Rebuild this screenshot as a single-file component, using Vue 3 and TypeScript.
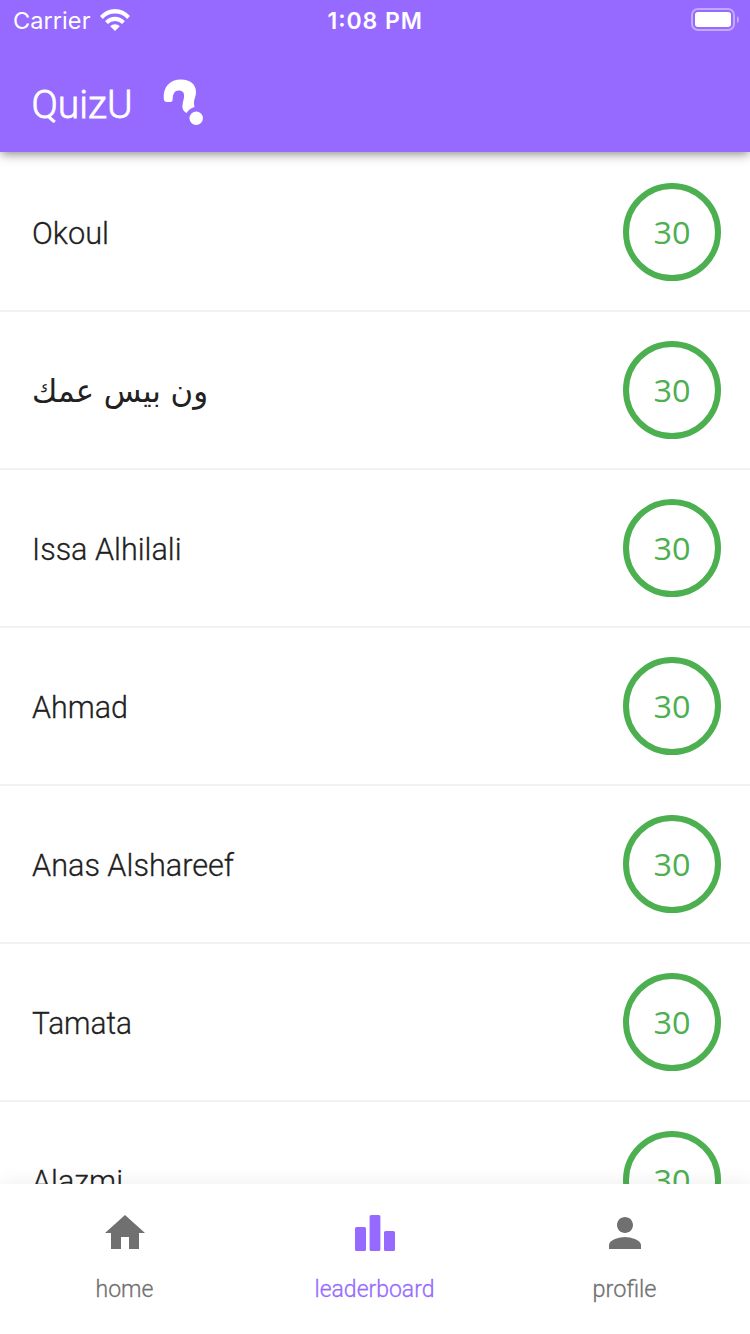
<script setup lang="ts">
interface Entry {
  name: string
  width: number
  score: number
  arabic?: boolean
}

const entries: Entry[] = [
  { name: 'Okoul', width: 77, score: 30 },
  { name: 'ون بيس عمك', width: 176, score: 30, arabic: true },
  { name: 'Issa Alhilali', width: 149.5, score: 30 },
  { name: 'Ahmad', width: 96, score: 30 },
  { name: 'Anas Alshareef', width: 202, score: 30 },
  { name: 'Tamata', width: 100, score: 30 },
  { name: 'Alazmi', width: 91, score: 30 },
]

const tabs = [
  { label: 'home', width: 58, icon: 'M10 20v-6h4v6h5v-8h3L12 3 2 12h3v8z', active: false },
  {
    label: 'leaderboard',
    width: 120,
    icon: 'M2.8 9h3.900q.8 0 .8.8v10.4q0 .8-.8.8H2.8q-.8 0-.8-.8V9.8Q2 9 2.8 9zM10.1 3h3.8q.8 0 .8.8v16.4q0 .8-.8.8h-3.800q-.8 0-.8-.8V3.8q0-.8.8-.8zM17.300 11h3.900q.8 0 .8.8v8.4q0 .8-.8.8h-3.900q-.8 0-.8-.8v-8.4q0-.8.8-.8z',
    active: true,
  },
  {
    label: 'profile',
    width: 64,
    icon: 'M12 12c2.21 0 4-1.79 4-4s-1.79-4-4-4-4 1.79-4 4 1.79 4 4 4zm0 2c-2.67 0-8 1.34-8 4v2h16v-2c0-2.66-5.33-4-8-4z',
    active: false,
  },
]
</script>

<template>
  <div class="screen">
    <header class="top">
      <div class="status">
        <div class="carrier">
          <svg width="77" height="40"><text x="0" y="29" textLength="77.5">Carrier</text></svg>
          <svg class="wifi" width="30" height="22" viewBox="0 0 30 22">
            <path d="M0 7.1Q6.4 0 15 0t15 7.1l-2.8 2.8Q22 4.600 15 4.600T2.8 9.9z" />
            <path d="M5.1 12.2Q9 7.7 15 7.7t9.9 4.5l-2.8 2.8Q19 12.100 15 12.100T7.9 15z" />
            <path d="M10.2 17.3Q12 15.2 15 15.2t4.8 2.1L15 22z" />
          </svg>
        </div>
        <svg class="time" width="94" height="40"><text x="-0.5" y="29" textLength="94.5">1:08 PM</text></svg>
        <svg class="battery" width="50" height="26" viewBox="0 0 50 26">
          <rect x="2" y="2" width="42" height="21" rx="6" class="shell" />
          <rect x="5" y="5" width="36" height="15" rx="3" />
          <path d="M47 9q2 1 2 3.5T47 16z" class="tip" />
        </svg>
      </div>
      <div class="bar">
        <svg width="101" height="60"><text x="-0.5" y="42" textLength="101" lengthAdjust="spacingAndGlyphs">QuizU</text></svg>
        <svg class="question" width="42" height="48" viewBox="0 0 42 48">
          <path d="M.8 21C-.3 9 7 1.500 18 1.500c9.500 0 15 5 15 12.500 0 4.500-2.500 8-2 12l.5 3c-3.500 1-6 3-8 6-3-2-4.500-4-4-8 .4-4 1.800-6.500 1.600-10-.2-3-2-4.500-5.100-4.500-4.500 0-6 3-6.300 8.500q0 3-2.500 3H4q-3 0-3.200-3z" />
          <circle cx="33.200" cy="40.200" r="6.700" />
        </svg>
      </div>
    </header>

    <main class="list">
      <div v-for="entry in entries" :key="entry.name" class="row">
        <svg class="name" :class="{ arabic: entry.arabic }" width="260" height="60">
          <text x="0" y="42" :textLength="entry.width" lengthAdjust="spacingAndGlyphs">{{ entry.name }}</text>
        </svg>
        <div class="score">
          <svg width="36" height="60"><text x="-0.5" y="42" textLength="37" lengthAdjust="spacingAndGlyphs">{{ entry.score }}</text></svg>
        </div>
      </div>
    </main>

    <nav class="tabs">
      <div v-for="tab in tabs" :key="tab.label" class="tab" :class="{ active: tab.active }">
        <svg width="48" height="48" viewBox="0 0 24 24"><path :d="tab.icon" /></svg>
        <svg class="label" :width="tab.width" height="44">
          <text x="-0.5" y="30" :textLength="tab.width" lengthAdjust="spacingAndGlyphs">{{ tab.label }}</text>
        </svg>
      </div>
    </nav>
  </div>
</template>

<style>
body {
  margin: 0;
  background: #fff;
}
</style>

<style scoped>
.screen {
  display: flex;
  flex-direction: column;
  width: 750px;
  height: 1334px;
  overflow: hidden;
  background: #fff;
  font-family: Roboto, "Open Sans", sans-serif;
}
svg {
  display: block;
  flex: none;
  fill: currentColor;
  overflow: visible;
}
.top {
  z-index: 1;
  flex: none;
  height: 152px;
  color: #fff;
  background: #9669ff;
  box-shadow: 0 4px 8px -2px rgba(0, 0, 0, 0.25), 0 2px 12px rgba(0, 0, 0, 0.25);
}
.status {
  display: grid;
  grid-template-columns: 1fr 94px 1fr;
  height: 40px;
  font: 400 23.500px Inter, sans-serif;
}
.carrier {
  display: flex;
  padding-left: 13px;
}
.wifi {
  margin: 9px 0 0 10px;
}
.time {
  font-weight: 600;
  font-size: 23px;
}
.battery {
  justify-self: end;
  margin: 7px 10px 0 0;
}
.shell {
  fill: none;
  stroke: rgba(255, 255, 255, 0.42);
  stroke-width: 2;
}
.tip {
  opacity: 0.45;
}
.bar {
  display: flex;
  gap: 30px;
  padding: 36px 0 0 32px;
  font-size: 39.500px;
  font-weight: 300;
}
.question {
  margin-top: 2px;
}
.list {
  flex: 1;
  min-height: 0;
  overflow: hidden;
  padding-top: 2px;
}
.row {
  display: flex;
  align-items: center;
  justify-content: space-between;
  box-sizing: border-box;
  height: 158px;
  padding: 0 29px 0 32px;
  border-bottom: 2px solid #f2f2f2;
  color: #212121;
  font-size: 32px;
}
.score {
  display: grid;
  place-items: center;
  box-sizing: border-box;
  width: 98px;
  height: 98px;
  border: 6px solid #4caf50;
  border-radius: 50%;
  color: #4caf50;
  font-family: "Open Sans", sans-serif;
  font-size: 31px;
  font-weight: 400;
}
.tabs {
  z-index: 1;
  display: grid;
  grid-template-columns: repeat(3, 1fr);
  flex: none;
  height: 150px;
  background: #fff;
  box-shadow: 0 0 20px rgba(0, 0, 0, 0.08);
}
.tab {
  display: flex;
  flex-direction: column;
  align-items: center;
  padding-top: 25px;
  color: #707070;
  font-size: 24px;
}
.label {
  margin-top: 10px;
}
.tab.active {
  color: #9669ff;
}
.name,
.label {
  font-weight: 300;
}
.name text,
.label text {
  stroke: currentColor;
  stroke-width: 0.3px;
}
.bar text {
  stroke: currentColor;
  stroke-width: 0.8px;
}
.name.arabic {
  font-family: "DejaVu Sans", sans-serif;
  font-size: 32px;
  font-weight: 400;
}
.name.arabic text {
  stroke: none;
}
</style>
